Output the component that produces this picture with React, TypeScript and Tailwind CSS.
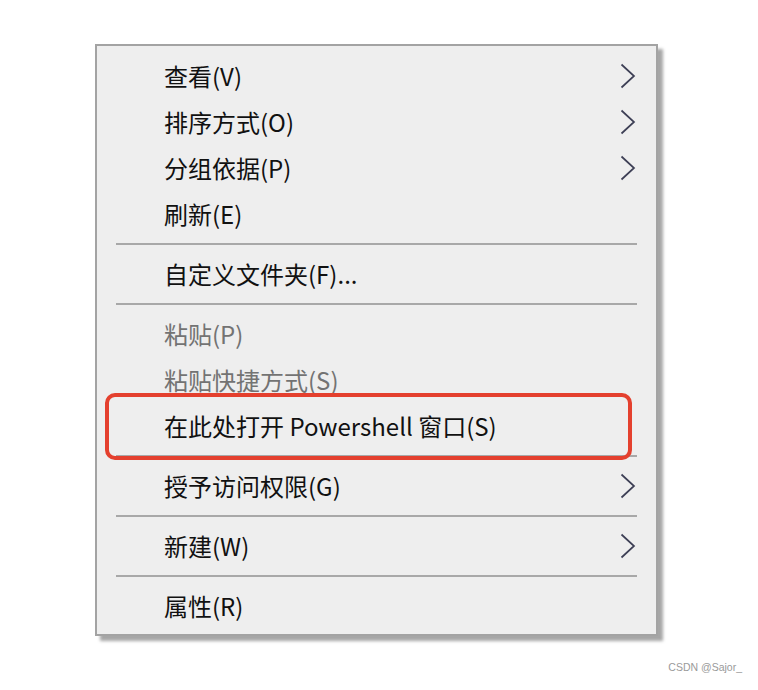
const FONT = "font-['Noto_Sans_CJK_SC','Noto_Sans',sans-serif]"

type Item =
  | { kind: "item"; label: string; sub?: boolean; disabled?: boolean }
  | { kind: "sep" }

const items: Item[] = [
  { kind: "item", label: "查看(V)", sub: true },
  { kind: "item", label: "排序方式(O)", sub: true },
  { kind: "item", label: "分组依据(P)", sub: true },
  { kind: "item", label: "刷新(E)" },
  { kind: "sep" },
  { kind: "item", label: "自定义文件夹(F)..." },
  { kind: "sep" },
  { kind: "item", label: "粘贴(P)", disabled: true },
  { kind: "item", label: "粘贴快捷方式(S)", disabled: true },
  { kind: "item", label: "在此处打开 Powershell 窗口(S)" },
  { kind: "sep" },
  { kind: "item", label: "授予访问权限(G)", sub: true },
  { kind: "sep" },
  { kind: "item", label: "新建(W)", sub: true },
  { kind: "sep" },
  { kind: "item", label: "属性(R)" },
]

const Chevron = () => (
  <svg width="16" height="26" viewBox="0 0 16 26" fill="none">
    <polyline points="1.5,1.5 14,13 1.5,24.5" stroke="#3d3f55" strokeWidth="1.7" />
  </svg>
)

export default function App() {
  return (
    <div className={`min-h-[690px] w-[758px] bg-white pl-[95px] pt-[44px] ${FONT}`}>
      <div className="relative w-[563px] border-2 border-[#a3a3a3] bg-[#eeeeee] pt-[7px] pb-[5px] shadow-[5px_5px_3px_rgba(0,0,0,0.35)]">
        {items.map((it, i) =>
          it.kind === "sep" ? (
            <div key={i} className="flex h-[14px] items-center px-[19px]">
              <div className="h-[2px] w-full bg-[#a8a8a8]" />
            </div>
          ) : (
            <div key={i} className="flex h-[46px] items-center justify-between pl-[67px] pr-[20px]">
              <span className={`text-[24px] leading-none ${it.disabled ? "text-[#737373]" : "text-[#111]"}`}>
                {it.label}
              </span>
              {it.sub && <Chevron />}
            </div>
          )
        )}

        {/* highlight annotation */}
        <div className="absolute left-[8px] top-[347px] h-[67px] w-[527px] rounded-[10px] border-4 border-[#e4402e]" />
      </div>

      <div className="mt-[24px] flex justify-end pr-[16px] font-['Liberation_Sans',sans-serif] text-[10.5px] text-[#9a9a9a]">
        CSDN @Sajor_
      </div>
    </div>
  )
}
